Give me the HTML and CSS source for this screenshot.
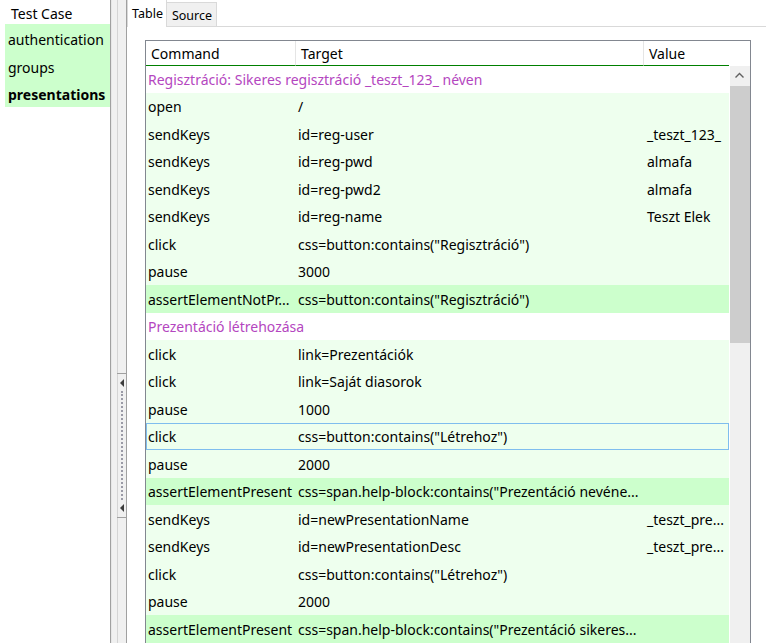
FILE: index.html
```
<!DOCTYPE html>
<html lang="hu">
<head>
<meta charset="utf-8">
<title>Selenium IDE</title>
<link rel="stylesheet" href="styles.css">
</head>
<body>
<div class="app">
  <aside class="sidebar">
    <div class="sb-head">Test Case</div>
    <ul class="suite">
      <li>authentication</li>
      <li>groups</li>
      <li class="current">presentations</li>
    </ul>
  </aside>
  <div class="splitter">
    <div class="grip">
      <span class="arrow"></span>
      <span class="dots"></span>
      <span class="arrow"></span>
    </div>
  </div>
  <main class="editor">
    <div class="tabs">
      <div class="tab active">Table</div>
      <div class="tab">Source</div>
    </div>
    <div class="panel">
      <div class="grid">
        <div class="thead">
          <div class="th c1">Command</div>
          <div class="th c2">Target</div>
          <div class="th c3">Value</div>
          <div class="th filler"></div>
        </div>
        <div class="tbody">
          <div class="rows">
            <div class="row comment first"><div class="cell all">Regisztráció: Sikeres regisztráció _teszt_123_ néven</div></div>
            <div class="row"><div class="cell">open</div><div class="cell">/</div><div class="cell v"></div></div>
            <div class="row"><div class="cell">sendKeys</div><div class="cell">id=reg-user</div><div class="cell v">_teszt_123_</div></div>
            <div class="row"><div class="cell">sendKeys</div><div class="cell">id=reg-pwd</div><div class="cell v">almafa</div></div>
            <div class="row"><div class="cell">sendKeys</div><div class="cell">id=reg-pwd2</div><div class="cell v">almafa</div></div>
            <div class="row"><div class="cell">sendKeys</div><div class="cell">id=reg-name</div><div class="cell v">Teszt Elek</div></div>
            <div class="row"><div class="cell">click</div><div class="cell">css=button:contains("Regisztráció")</div><div class="cell v"></div></div>
            <div class="row"><div class="cell">pause</div><div class="cell">3000</div><div class="cell v"></div></div>
            <div class="row assert"><div class="cell">assertElementNotPr...</div><div class="cell">css=button:contains("Regisztráció")</div><div class="cell v"></div></div>
            <div class="row comment"><div class="cell all">Prezentáció létrehozása</div></div>
            <div class="row"><div class="cell">click</div><div class="cell">link=Prezentációk</div><div class="cell v"></div></div>
            <div class="row"><div class="cell">click</div><div class="cell">link=Saját diasorok</div><div class="cell v"></div></div>
            <div class="row"><div class="cell">pause</div><div class="cell">1000</div><div class="cell v"></div></div>
            <div class="row selected"><div class="cell">click</div><div class="cell">css=button:contains("Létrehoz")</div><div class="cell v"></div></div>
            <div class="row"><div class="cell">pause</div><div class="cell">2000</div><div class="cell v"></div></div>
            <div class="row assert"><div class="cell">assertElementPresent</div><div class="cell">css=span.help-block:contains("Prezentáció nevéne...</div><div class="cell v"></div></div>
            <div class="row"><div class="cell">sendKeys</div><div class="cell">id=newPresentationName</div><div class="cell v">_teszt_pre...</div></div>
            <div class="row"><div class="cell">sendKeys</div><div class="cell">id=newPresentationDesc</div><div class="cell v">_teszt_pre...</div></div>
            <div class="row"><div class="cell">click</div><div class="cell">css=button:contains("Létrehoz")</div><div class="cell v"></div></div>
            <div class="row"><div class="cell">pause</div><div class="cell">2000</div><div class="cell v"></div></div>
            <div class="row assert"><div class="cell">assertElementPresent</div><div class="cell">css=span.help-block:contains("Prezentáció sikeres...</div><div class="cell v"></div></div>
          </div>
          <div class="scrollbar">
            <div class="sb-up">
              <svg width="20" height="20" viewBox="0 0 20 20"><polyline points="5.5,11.5 9.5,7.5 13.5,11.5" fill="none" stroke="#606060" stroke-width="1.4"/></svg>
            </div>
            <div class="sb-thumb"></div>
          </div>
        </div>
      </div>
    </div>
  </main>
</div>
</body>
</html>
```
FILE: styles.css
```
html, body {
  margin: 0;
  padding: 0;
}
body {
  width: 766px;
  height: 643px;
  overflow: hidden;
  background: #ffffff;
  color: #000000;
  font-family: "Noto Sans", "Open Sans", sans-serif;
  font-size: 14px;
}
.app {
  display: flex;
  height: 643px;
}

/* sidebar */
.sidebar {
  flex: none;
  width: 110px;
  border-right: 1px solid #a0a0a0;
  background: #ffffff;
}
.sb-head {
  height: 24px;
  box-sizing: border-box;
  padding: 4px 0 0 11px;
  line-height: 20px;
}
.suite {
  list-style: none;
  margin: 0 0 0 5px;
  padding: 0;
  background: #ccffcc;
}
.suite li {
  height: 27.67px;
  box-sizing: border-box;
  padding: 4px 0 0 3px;
  line-height: 23.67px;
  white-space: nowrap;
}
.suite li.current {
  font-weight: bold;
}

/* splitter */
.splitter {
  flex: none;
  width: 15px;
  box-sizing: border-box;
  padding-top: 373px;
  background: linear-gradient(to right, #e6e6e6 0, #e6e6e6 1px, #f0f0f0 1px, #f0f0f0 6px, #d4d4d4 6px, #d4d4d4 7px, #f0f0f0 7px);
}
.grip {
  margin-left: 6px;
  width: 9px;
  height: 145px;
  box-sizing: border-box;
  border-top: 1px solid #a0a0a0;
  border-bottom: 1px solid #a0a0a0;
  display: flex;
  flex-direction: column;
  align-items: center;
  padding: 5px 0;
}
.arrow {
  width: 0;
  height: 0;
  border-right: 4px solid #3c3c3c;
  border-top: 4px solid transparent;
  border-bottom: 4px solid transparent;
}
.dots {
  flex: 1;
  width: 0;
  margin: 4px 0;
  border-left: 2px dotted #9a9aa6;
}

/* editor */
.editor {
  flex: 1;
  min-width: 0;
  border-left: 1px solid #a0a0a0;
}
.tabs {
  display: flex;
  align-items: flex-end;
  height: 27px;
  box-sizing: border-box;
  border-bottom: 1px solid #d9d9d9;
  font-size: 12.5px;
}
.tab {
  height: 24px;
  box-sizing: border-box;
  padding: 4px 4px 0 5px;
  line-height: 18px;
  background: #f0f0f0;
  border-top: 1px solid #d9d9d9;
  border-right: 1px solid #d9d9d9;
}
.tab.active {
  height: 27px;
  margin-bottom: -1px;
  padding: 5px 3px 0 4px;
  background: #ffffff;
  border-top: none;
  border-left: 1px solid #d9d9d9;
}
.panel {
  padding: 13px 15px 0 18px;
}
.grid {
  border: 1px solid #828790;
  border-bottom: none;
  height: 603px;
  overflow: hidden;
}
.thead {
  display: flex;
  height: 25px;
}
.th {
  box-sizing: border-box;
  height: 25px;
  padding: 1px 0 0 5px;
  line-height: 23px;
  border-bottom: 1px solid #008000;
  white-space: nowrap;
}
.th.c1 {
  width: 150px;
  border-right: 1px solid #e5e5e5;
}
.th.c2 {
  width: 348px;
  border-right: 1px solid #e5e5e5;
}
.th.c3 {
  width: 85px;
}
.th.filler {
  flex: 1;
  padding: 0;
  border-bottom: none;
}
.tbody {
  display: flex;
  height: 578px;
}
.rows {
  width: 583px;
  overflow: hidden;
}
.row {
  display: grid;
  grid-template-columns: 150px 348px 85px;
  height: 27.5px;
  background: #eeffee;
}
.row.first {
  height: 26.5px;
}
.row.assert {
  background: #ccffcc;
}
.row.comment {
  background: #ffffff;
  color: #b446c0;
}
.row.selected {
  box-shadow: inset 0 0 0 1px #7fbdee;
}
.cell {
  display: flex;
  align-items: center;
  padding: 1px 0 0 2px;
  white-space: nowrap;
  overflow: hidden;
}
.cell.v {
  padding-left: 3px;
}
.cell.all {
  grid-column: 1 / -1;
}
.scrollbar {
  width: 20px;
  margin-left: 1px;
  background: #f0f0f0;
}
.sb-up {
  height: 20px;
}
.sb-up svg {
  display: block;
}
.sb-thumb {
  height: 257px;
  background: #cdcdcd;
}
```
